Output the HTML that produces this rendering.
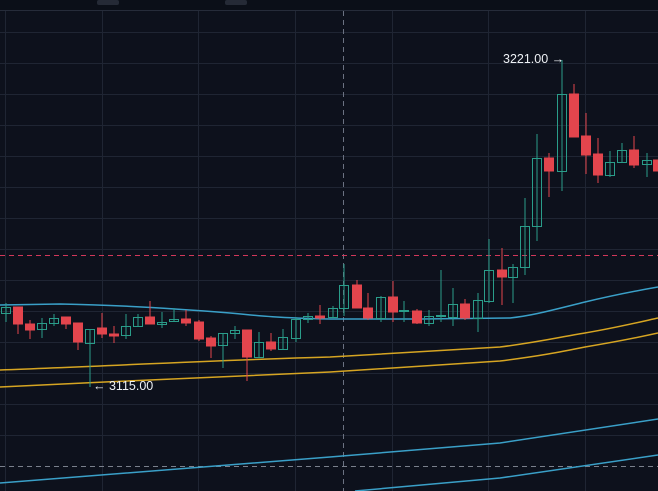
<!DOCTYPE html>
<html><head><meta charset="utf-8"><style>
html,body{margin:0;padding:0;background:#0d111c;}
svg{display:block}
text{font-family:"Liberation Sans",sans-serif;font-size:12.5px;fill:#eef1f5}
</style></head><body>
<svg width="658" height="491" viewBox="0 0 658 491" xmlns="http://www.w3.org/2000/svg">
<rect width="658" height="491" fill="#0d111c"/>
<rect width="658" height="10" fill="#0b0f18"/>
<rect x="97" y="0" width="22" height="5" rx="2" fill="#252a36"/>
<rect x="225" y="0" width="22" height="5" rx="2" fill="#252a36"/>
<line x1="0" y1="10.5" x2="658" y2="10.5" stroke="#262c3a"/>
<g stroke="#1f2533" stroke-width="1">
<line x1="0" y1="32.5" x2="658" y2="32.5"/><line x1="0" y1="63.5" x2="658" y2="63.5"/><line x1="0" y1="94.5" x2="658" y2="94.5"/><line x1="0" y1="125.5" x2="658" y2="125.5"/><line x1="0" y1="156.5" x2="658" y2="156.5"/><line x1="0" y1="187.5" x2="658" y2="187.5"/><line x1="0" y1="218.5" x2="658" y2="218.5"/><line x1="0" y1="249.5" x2="658" y2="249.5"/><line x1="0" y1="280.5" x2="658" y2="280.5"/><line x1="0" y1="311.5" x2="658" y2="311.5"/><line x1="0" y1="342.5" x2="658" y2="342.5"/><line x1="0" y1="373.5" x2="658" y2="373.5"/><line x1="0" y1="404.5" x2="658" y2="404.5"/><line x1="0" y1="435.5" x2="658" y2="435.5"/>
<line x1="5.5" y1="11" x2="5.5" y2="491"/><line x1="102.5" y1="11" x2="102.5" y2="491"/><line x1="198.5" y1="11" x2="198.5" y2="491"/><line x1="295.5" y1="11" x2="295.5" y2="491"/><line x1="392.5" y1="11" x2="392.5" y2="491"/><line x1="488.5" y1="11" x2="488.5" y2="491"/><line x1="585.5" y1="11" x2="585.5" y2="491"/>
</g>
<line x1="343.5" y1="11" x2="343.5" y2="491" stroke="#6b7282" stroke-dasharray="5,4"/>
<line x1="0" y1="255.5" x2="658" y2="255.5" stroke="#d2385a" stroke-width="1.1" stroke-dasharray="5,4"/>
<line x1="0" y1="466.5" x2="658" y2="466.5" stroke="#7a808c" stroke-dasharray="5,4"/>
<g fill="none" stroke-width="1.5">
<path d="M0 305 L60 304 C120 305 180 309 230 313 C260 316 280 318 330 319 L420 319 L510 318 C530 316 545 312 585 302 C610 296 635 291 658 287" stroke="#3aa0c8"/>
<path d="M0 370 C110 366 220 360 330 357 L500 347 C540 342 560 337 585 333 C615 328 640 322 658 318" stroke="#d6a522"/>
<path d="M0 387 C110 382 220 376 330 372 L500 361 C540 356 560 352 585 347 C615 342 640 337 658 333" stroke="#d6a522"/>
<path d="M0 483 L330 457 L500 443 L658 419" stroke="#3aa0c8"/>
<path d="M355 491 L500 478 L658 455" stroke="#3aa0c8"/>
</g>
<g stroke="#2a9d8a" fill="none" stroke-width="1">
<line x1="6" y1="303" x2="6" y2="322"/><rect x="1.5" y="307.5" width="9" height="6"/>
<line x1="42" y1="318" x2="42" y2="338"/><rect x="37.5" y="323.5" width="9" height="6"/>
<line x1="54" y1="314" x2="54" y2="326"/><rect x="49.5" y="318.5" width="9" height="5"/>
<line x1="90" y1="329" x2="90" y2="387"/><rect x="85.5" y="329.5" width="9" height="14"/>
<line x1="126" y1="314" x2="126" y2="339"/><rect x="121.5" y="326.5" width="9" height="9"/>
<line x1="138" y1="314" x2="138" y2="326"/><rect x="133.5" y="317.5" width="9" height="9"/>
<line x1="162" y1="312" x2="162" y2="328"/><rect x="157.5" y="322.5" width="9" height="2"/>
<line x1="174" y1="308" x2="174" y2="321"/><rect x="169.5" y="319.5" width="9" height="2"/>
<line x1="223" y1="333" x2="223" y2="368"/><rect x="218.5" y="333.5" width="9" height="12"/>
<line x1="235" y1="326" x2="235" y2="339"/><rect x="230.5" y="330.5" width="9" height="3"/>
<line x1="259" y1="332" x2="259" y2="357"/><rect x="254.5" y="342.5" width="9" height="15"/>
<line x1="283" y1="329" x2="283" y2="350"/><rect x="278.5" y="337.5" width="9" height="12"/>
<line x1="296" y1="317" x2="296" y2="342"/><rect x="291.5" y="319.5" width="9" height="19"/>
<line x1="308" y1="313" x2="308" y2="323"/><rect x="303.5" y="316.5" width="9" height="3"/>
<line x1="333" y1="306" x2="333" y2="318"/><rect x="328.5" y="308.5" width="9" height="9"/>
<line x1="344" y1="264" x2="344" y2="316"/><rect x="339.5" y="285.5" width="9" height="23"/>
<line x1="381" y1="296" x2="381" y2="322"/><rect x="376.5" y="297.5" width="9" height="21"/>
<line x1="404" y1="301" x2="404" y2="322"/><rect x="399.5" y="310.5" width="9" height="1"/>
<line x1="429" y1="310" x2="429" y2="326"/><rect x="424.5" y="316.5" width="9" height="7"/>
<line x1="441" y1="270" x2="441" y2="322"/><rect x="436.5" y="315.5" width="9" height="1"/>
<line x1="453" y1="288" x2="453" y2="326"/><rect x="448.5" y="304.5" width="9" height="13"/>
<line x1="478" y1="293" x2="478" y2="332"/><rect x="473.5" y="300.5" width="9" height="18"/>
<line x1="489" y1="239" x2="489" y2="303"/><rect x="484.5" y="270.5" width="9" height="31"/>
<line x1="513" y1="264" x2="513" y2="303"/><rect x="508.5" y="267.5" width="9" height="10"/>
<line x1="525" y1="198" x2="525" y2="275"/><rect x="520.5" y="226.5" width="9" height="41"/>
<line x1="537" y1="134" x2="537" y2="241"/><rect x="532.5" y="158.5" width="9" height="68"/>
<line x1="562" y1="60" x2="562" y2="191"/><rect x="557.5" y="94.5" width="9" height="77"/>
<line x1="610" y1="151" x2="610" y2="177"/><rect x="605.5" y="162.5" width="9" height="13"/>
<line x1="622" y1="143" x2="622" y2="162"/><rect x="617.5" y="150.5" width="9" height="12"/>
<line x1="647" y1="153" x2="647" y2="177"/><rect x="642.5" y="160.5" width="9" height="4"/>
</g>
<g stroke="#e3454d" fill="#e3454d" stroke-width="1">
<line x1="18" y1="307" x2="18" y2="334"/><rect x="13.5" y="307" width="9" height="17"/>
<line x1="30" y1="320" x2="30" y2="339"/><rect x="25.5" y="324" width="9" height="6"/>
<line x1="66" y1="317" x2="66" y2="329"/><rect x="61.5" y="317" width="9" height="7"/>
<line x1="78" y1="323" x2="78" y2="350"/><rect x="73.5" y="323" width="9" height="19"/>
<line x1="102" y1="313" x2="102" y2="338"/><rect x="97.5" y="328" width="9" height="6"/>
<line x1="114" y1="326" x2="114" y2="343"/><rect x="109.5" y="334" width="9" height="2"/>
<line x1="150" y1="301" x2="150" y2="324"/><rect x="145.5" y="317" width="9" height="7"/>
<line x1="186" y1="310" x2="186" y2="326"/><rect x="181.5" y="319" width="9" height="4"/>
<line x1="199" y1="320" x2="199" y2="341"/><rect x="194.5" y="322" width="9" height="17"/>
<line x1="211" y1="336" x2="211" y2="358"/><rect x="206.5" y="338" width="9" height="8"/>
<line x1="247" y1="330" x2="247" y2="381"/><rect x="242.5" y="330" width="9" height="27"/>
<line x1="271" y1="333" x2="271" y2="351"/><rect x="266.5" y="342" width="9" height="7"/>
<line x1="320" y1="305" x2="320" y2="324"/><rect x="315.5" y="316" width="9" height="2"/>
<line x1="357" y1="280" x2="357" y2="308"/><rect x="352.5" y="285" width="9" height="23"/>
<line x1="368" y1="293" x2="368" y2="320"/><rect x="363.5" y="308" width="9" height="10"/>
<line x1="393" y1="281" x2="393" y2="322"/><rect x="388.5" y="297" width="9" height="15"/>
<line x1="417" y1="309" x2="417" y2="324"/><rect x="412.5" y="311" width="9" height="12"/>
<line x1="465" y1="299" x2="465" y2="320"/><rect x="460.5" y="304" width="9" height="14"/>
<line x1="502" y1="248" x2="502" y2="305"/><rect x="497.5" y="270" width="9" height="7"/>
<line x1="549" y1="153" x2="549" y2="197"/><rect x="544.5" y="158" width="9" height="13"/>
<line x1="574" y1="84" x2="574" y2="137"/><rect x="569.5" y="94" width="9" height="43"/>
<line x1="586" y1="113" x2="586" y2="174"/><rect x="581.5" y="136" width="9" height="19"/>
<line x1="598" y1="138" x2="598" y2="183"/><rect x="593.5" y="154" width="9" height="21"/>
<line x1="634" y1="136" x2="634" y2="168"/><rect x="629.5" y="150" width="9" height="15"/>
<rect x="653.5" y="160" width="9" height="11"/>
</g>
<text x="503" y="63">3221.00 →</text>
<text x="93" y="390">← 3115.00</text>
</svg>
</body></html>
